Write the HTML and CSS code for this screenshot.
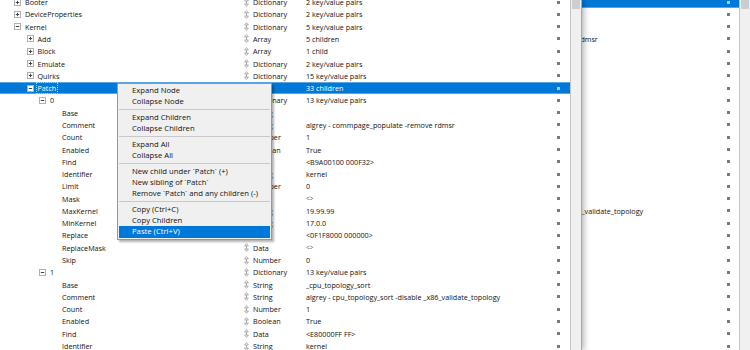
FILE: index.html
```html
<!DOCTYPE html>
<html>
<head>
<meta charset="utf-8">
<link rel="stylesheet" href="styles.css">
</head>
<body>
<div class="desktop">
  <div class="window win-back">
    <div class="tree tree-back">
      <div class="row sel"><div class="name"></div><div class="type"></div><div class="value"></div><div class="mark"></div></div>
      <div class="row"><div class="name"></div><div class="type"></div><div class="value"></div><div class="mark"></div></div>
      <div class="row"><div class="name"></div><div class="type"></div><div class="value"></div><div class="mark"></div></div>
      <div class="row"><div class="name"></div><div class="type"></div><div class="value">algrey - commpage_populate -remove rdmsr</div><div class="mark"></div></div>
      <div class="row"><div class="name"></div><div class="type"></div><div class="value"></div><div class="mark"></div></div>
      <div class="row"><div class="name"></div><div class="type"></div><div class="value"></div><div class="mark"></div></div>
      <div class="row"><div class="name"></div><div class="type"></div><div class="value"></div><div class="mark"></div></div>
      <div class="row"><div class="name"></div><div class="type"></div><div class="value"></div><div class="mark"></div></div>
      <div class="row"><div class="name"></div><div class="type"></div><div class="value"></div><div class="mark"></div></div>
      <div class="row"><div class="name"></div><div class="type"></div><div class="value"></div><div class="mark"></div></div>
      <div class="row"><div class="name"></div><div class="type"></div><div class="value"></div><div class="mark"></div></div>
      <div class="row"><div class="name"></div><div class="type"></div><div class="value"></div><div class="mark"></div></div>
      <div class="row"><div class="name"></div><div class="type"></div><div class="value"></div><div class="mark"></div></div>
      <div class="row"><div class="name"></div><div class="type"></div><div class="value"></div><div class="mark"></div></div>
      <div class="row"><div class="name"></div><div class="type"></div><div class="value"></div><div class="mark"></div></div>
      <div class="row"><div class="name"></div><div class="type"></div><div class="value"></div><div class="mark"></div></div>
      <div class="row"><div class="name"></div><div class="type"></div><div class="value"></div><div class="mark"></div></div>
      <div class="row"><div class="name"></div><div class="type"></div><div class="value">algrey - cpu_topology_sort -disable _x86_validate_topology</div><div class="mark"></div></div>
      <div class="row"><div class="name"></div><div class="type"></div><div class="value"></div><div class="mark"></div></div>
      <div class="row"><div class="name"></div><div class="type"></div><div class="value"></div><div class="mark"></div></div>
      <div class="row"><div class="name"></div><div class="type"></div><div class="value"></div><div class="mark"></div></div>
      <div class="row"><div class="name"></div><div class="type"></div><div class="value"></div><div class="mark"></div></div>
      <div class="row"><div class="name"></div><div class="type"></div><div class="value"></div><div class="mark"></div></div>
      <div class="row"><div class="name"></div><div class="type"></div><div class="value"></div><div class="mark"></div></div>
      <div class="row"><div class="name"></div><div class="type"></div><div class="value"></div><div class="mark"></div></div>
      <div class="row"><div class="name"></div><div class="type"></div><div class="value"></div><div class="mark"></div></div>
      <div class="row"><div class="name"></div><div class="type"></div><div class="value"></div><div class="mark"></div></div>
      <div class="row"><div class="name"></div><div class="type"></div><div class="value"></div><div class="mark"></div></div>
      <div class="row"><div class="name"></div><div class="type"></div><div class="value"></div><div class="mark"></div></div>
    </div>
    <div class="vscroll"><div class="thumb"></div></div>
  </div>

  <div class="window win-front">
    <div class="tree tree-front">
      <div class="row"><div class="name lvl0"><svg class="tw" viewBox="0 0 7 7"><rect x=".5" y=".5" width="6" height="6" fill="#fff" stroke="#b0b0b0"/><path d="M1.8 3.5h3.4M3.5 1.8v3.4" stroke="#444"/></svg><span>Booter</span></div><div class="type"><svg class="ti" viewBox="0 0 5 9"><path d="M2.5 .6 4.4 3H.6Z M2.5 8.4 .6 6h3.8Z" fill="none" stroke="#9a9a9a" stroke-width=".8"/><path d="M2.5 3v3" stroke="#9a9a9a" stroke-width=".8"/></svg><span>Dictionary</span></div><div class="value">2 key/value pairs</div><div class="mark"></div></div>
      <div class="row"><div class="name lvl0"><svg class="tw" viewBox="0 0 7 7"><rect x=".5" y=".5" width="6" height="6" fill="#fff" stroke="#b0b0b0"/><path d="M1.8 3.5h3.4M3.5 1.8v3.4" stroke="#444"/></svg><span>DeviceProperties</span></div><div class="type"><svg class="ti" viewBox="0 0 5 9"><path d="M2.5 .6 4.4 3H.6Z M2.5 8.4 .6 6h3.8Z" fill="none" stroke="#9a9a9a" stroke-width=".8"/><path d="M2.5 3v3" stroke="#9a9a9a" stroke-width=".8"/></svg><span>Dictionary</span></div><div class="value">2 key/value pairs</div><div class="mark"></div></div>
      <div class="row"><div class="name lvl0"><svg class="tw" viewBox="0 0 7 7"><rect x=".5" y=".5" width="6" height="6" fill="#fff" stroke="#b0b0b0"/><path d="M1.8 3.5h3.4" stroke="#444"/></svg><span>Kernel</span></div><div class="type"><svg class="ti" viewBox="0 0 5 9"><path d="M2.5 .6 4.4 3H.6Z M2.5 8.4 .6 6h3.8Z" fill="none" stroke="#9a9a9a" stroke-width=".8"/><path d="M2.5 3v3" stroke="#9a9a9a" stroke-width=".8"/></svg><span>Dictionary</span></div><div class="value">5 key/value pairs</div><div class="mark"></div></div>
      <div class="row"><div class="name lvl1"><svg class="tw" viewBox="0 0 7 7"><rect x=".5" y=".5" width="6" height="6" fill="#fff" stroke="#b0b0b0"/><path d="M1.8 3.5h3.4M3.5 1.8v3.4" stroke="#444"/></svg><span>Add</span></div><div class="type"><svg class="ti" viewBox="0 0 5 9"><path d="M2.5 .6 4.4 3H.6Z M2.5 8.4 .6 6h3.8Z" fill="none" stroke="#9a9a9a" stroke-width=".8"/><path d="M2.5 3v3" stroke="#9a9a9a" stroke-width=".8"/></svg><span>Array</span></div><div class="value">5 children</div><div class="mark"></div></div>
      <div class="row"><div class="name lvl1"><svg class="tw" viewBox="0 0 7 7"><rect x=".5" y=".5" width="6" height="6" fill="#fff" stroke="#b0b0b0"/><path d="M1.8 3.5h3.4M3.5 1.8v3.4" stroke="#444"/></svg><span>Block</span></div><div class="type"><svg class="ti" viewBox="0 0 5 9"><path d="M2.5 .6 4.4 3H.6Z M2.5 8.4 .6 6h3.8Z" fill="none" stroke="#9a9a9a" stroke-width=".8"/><path d="M2.5 3v3" stroke="#9a9a9a" stroke-width=".8"/></svg><span>Array</span></div><div class="value">1 child</div><div class="mark"></div></div>
      <div class="row"><div class="name lvl1"><svg class="tw" viewBox="0 0 7 7"><rect x=".5" y=".5" width="6" height="6" fill="#fff" stroke="#b0b0b0"/><path d="M1.8 3.5h3.4M3.5 1.8v3.4" stroke="#444"/></svg><span>Emulate</span></div><div class="type"><svg class="ti" viewBox="0 0 5 9"><path d="M2.5 .6 4.4 3H.6Z M2.5 8.4 .6 6h3.8Z" fill="none" stroke="#9a9a9a" stroke-width=".8"/><path d="M2.5 3v3" stroke="#9a9a9a" stroke-width=".8"/></svg><span>Dictionary</span></div><div class="value">2 key/value pairs</div><div class="mark"></div></div>
      <div class="row"><div class="name lvl1"><svg class="tw" viewBox="0 0 7 7"><rect x=".5" y=".5" width="6" height="6" fill="#fff" stroke="#b0b0b0"/><path d="M1.8 3.5h3.4M3.5 1.8v3.4" stroke="#444"/></svg><span>Quirks</span></div><div class="type"><svg class="ti" viewBox="0 0 5 9"><path d="M2.5 .6 4.4 3H.6Z M2.5 8.4 .6 6h3.8Z" fill="none" stroke="#9a9a9a" stroke-width=".8"/><path d="M2.5 3v3" stroke="#9a9a9a" stroke-width=".8"/></svg><span>Dictionary</span></div><div class="value">15 key/value pairs</div><div class="mark"></div></div>
      <div class="row sel"><div class="name lvl1"><svg class="tw" viewBox="0 0 7 7"><rect x=".5" y=".5" width="6" height="6" fill="#fff" stroke="#b0b0b0"/><path d="M1.8 3.5h3.4" stroke="#444"/></svg><span class="focus">Patch</span></div><div class="type"><svg class="ti" viewBox="0 0 5 9"><path d="M2.5 .6 4.4 3H.6Z M2.5 8.4 .6 6h3.8Z" fill="none" stroke="#9a9a9a" stroke-width=".8"/><path d="M2.5 3v3" stroke="#9a9a9a" stroke-width=".8"/></svg><span>Array</span></div><div class="value">33 children</div><div class="mark"></div></div>
      <div class="row"><div class="name lvl2"><svg class="tw" viewBox="0 0 7 7"><rect x=".5" y=".5" width="6" height="6" fill="#fff" stroke="#b0b0b0"/><path d="M1.8 3.5h3.4" stroke="#444"/></svg><span>0</span></div><div class="type"><svg class="ti" viewBox="0 0 5 9"><path d="M2.5 .6 4.4 3H.6Z M2.5 8.4 .6 6h3.8Z" fill="none" stroke="#9a9a9a" stroke-width=".8"/><path d="M2.5 3v3" stroke="#9a9a9a" stroke-width=".8"/></svg><span>Dictionary</span></div><div class="value">13 key/value pairs</div><div class="mark"></div></div>
      <div class="row"><div class="name lvl3"><span>Base</span></div><div class="type"><svg class="ti" viewBox="0 0 5 9"><path d="M2.5 .6 4.4 3H.6Z M2.5 8.4 .6 6h3.8Z" fill="none" stroke="#9a9a9a" stroke-width=".8"/><path d="M2.5 3v3" stroke="#9a9a9a" stroke-width=".8"/></svg><span>String</span></div><div class="value"></div><div class="mark"></div></div>
      <div class="row"><div class="name lvl3"><span>Comment</span></div><div class="type"><svg class="ti" viewBox="0 0 5 9"><path d="M2.5 .6 4.4 3H.6Z M2.5 8.4 .6 6h3.8Z" fill="none" stroke="#9a9a9a" stroke-width=".8"/><path d="M2.5 3v3" stroke="#9a9a9a" stroke-width=".8"/></svg><span>String</span></div><div class="value">algrey - commpage_populate -remove rdmsr</div><div class="mark"></div></div>
      <div class="row"><div class="name lvl3"><span>Count</span></div><div class="type"><svg class="ti" viewBox="0 0 5 9"><path d="M2.5 .6 4.4 3H.6Z M2.5 8.4 .6 6h3.8Z" fill="none" stroke="#9a9a9a" stroke-width=".8"/><path d="M2.5 3v3" stroke="#9a9a9a" stroke-width=".8"/></svg><span>Number</span></div><div class="value">1</div><div class="mark"></div></div>
      <div class="row"><div class="name lvl3"><span>Enabled</span></div><div class="type"><svg class="ti" viewBox="0 0 5 9"><path d="M2.5 .6 4.4 3H.6Z M2.5 8.4 .6 6h3.8Z" fill="none" stroke="#9a9a9a" stroke-width=".8"/><path d="M2.5 3v3" stroke="#9a9a9a" stroke-width=".8"/></svg><span>Boolean</span></div><div class="value">True</div><div class="mark"></div></div>
      <div class="row"><div class="name lvl3"><span>Find</span></div><div class="type"><svg class="ti" viewBox="0 0 5 9"><path d="M2.5 .6 4.4 3H.6Z M2.5 8.4 .6 6h3.8Z" fill="none" stroke="#9a9a9a" stroke-width=".8"/><path d="M2.5 3v3" stroke="#9a9a9a" stroke-width=".8"/></svg><span>Data</span></div><div class="value">&lt;B9A00100 000F32&gt;</div><div class="mark"></div></div>
      <div class="row"><div class="name lvl3"><span>Identifier</span></div><div class="type"><svg class="ti" viewBox="0 0 5 9"><path d="M2.5 .6 4.4 3H.6Z M2.5 8.4 .6 6h3.8Z" fill="none" stroke="#9a9a9a" stroke-width=".8"/><path d="M2.5 3v3" stroke="#9a9a9a" stroke-width=".8"/></svg><span>String</span></div><div class="value">kernel</div><div class="mark"></div></div>
      <div class="row"><div class="name lvl3"><span>Limit</span></div><div class="type"><svg class="ti" viewBox="0 0 5 9"><path d="M2.5 .6 4.4 3H.6Z M2.5 8.4 .6 6h3.8Z" fill="none" stroke="#9a9a9a" stroke-width=".8"/><path d="M2.5 3v3" stroke="#9a9a9a" stroke-width=".8"/></svg><span>Number</span></div><div class="value">0</div><div class="mark"></div></div>
      <div class="row"><div class="name lvl3"><span>Mask</span></div><div class="type"><svg class="ti" viewBox="0 0 5 9"><path d="M2.5 .6 4.4 3H.6Z M2.5 8.4 .6 6h3.8Z" fill="none" stroke="#9a9a9a" stroke-width=".8"/><path d="M2.5 3v3" stroke="#9a9a9a" stroke-width=".8"/></svg><span>Data</span></div><div class="value small">&lt;&gt;</div><div class="mark"></div></div>
      <div class="row"><div class="name lvl3"><span>MaxKernel</span></div><div class="type"><svg class="ti" viewBox="0 0 5 9"><path d="M2.5 .6 4.4 3H.6Z M2.5 8.4 .6 6h3.8Z" fill="none" stroke="#9a9a9a" stroke-width=".8"/><path d="M2.5 3v3" stroke="#9a9a9a" stroke-width=".8"/></svg><span>String</span></div><div class="value">19.99.99</div><div class="mark"></div></div>
      <div class="row"><div class="name lvl3"><span>MinKernel</span></div><div class="type"><svg class="ti" viewBox="0 0 5 9"><path d="M2.5 .6 4.4 3H.6Z M2.5 8.4 .6 6h3.8Z" fill="none" stroke="#9a9a9a" stroke-width=".8"/><path d="M2.5 3v3" stroke="#9a9a9a" stroke-width=".8"/></svg><span>String</span></div><div class="value">17.0.0</div><div class="mark"></div></div>
      <div class="row"><div class="name lvl3"><span>Replace</span></div><div class="type"><svg class="ti" viewBox="0 0 5 9"><path d="M2.5 .6 4.4 3H.6Z M2.5 8.4 .6 6h3.8Z" fill="none" stroke="#9a9a9a" stroke-width=".8"/><path d="M2.5 3v3" stroke="#9a9a9a" stroke-width=".8"/></svg><span>Data</span></div><div class="value">&lt;0F1F8000 000000&gt;</div><div class="mark"></div></div>
      <div class="row"><div class="name lvl3"><span>ReplaceMask</span></div><div class="type"><svg class="ti" viewBox="0 0 5 9"><path d="M2.5 .6 4.4 3H.6Z M2.5 8.4 .6 6h3.8Z" fill="none" stroke="#9a9a9a" stroke-width=".8"/><path d="M2.5 3v3" stroke="#9a9a9a" stroke-width=".8"/></svg><span>Data</span></div><div class="value small">&lt;&gt;</div><div class="mark"></div></div>
      <div class="row"><div class="name lvl3"><span>Skip</span></div><div class="type"><svg class="ti" viewBox="0 0 5 9"><path d="M2.5 .6 4.4 3H.6Z M2.5 8.4 .6 6h3.8Z" fill="none" stroke="#9a9a9a" stroke-width=".8"/><path d="M2.5 3v3" stroke="#9a9a9a" stroke-width=".8"/></svg><span>Number</span></div><div class="value">0</div><div class="mark"></div></div>
      <div class="row"><div class="name lvl2"><svg class="tw" viewBox="0 0 7 7"><rect x=".5" y=".5" width="6" height="6" fill="#fff" stroke="#b0b0b0"/><path d="M1.8 3.5h3.4" stroke="#444"/></svg><span>1</span></div><div class="type"><svg class="ti" viewBox="0 0 5 9"><path d="M2.5 .6 4.4 3H.6Z M2.5 8.4 .6 6h3.8Z" fill="none" stroke="#9a9a9a" stroke-width=".8"/><path d="M2.5 3v3" stroke="#9a9a9a" stroke-width=".8"/></svg><span>Dictionary</span></div><div class="value">13 key/value pairs</div><div class="mark"></div></div>
      <div class="row"><div class="name lvl3"><span>Base</span></div><div class="type"><svg class="ti" viewBox="0 0 5 9"><path d="M2.5 .6 4.4 3H.6Z M2.5 8.4 .6 6h3.8Z" fill="none" stroke="#9a9a9a" stroke-width=".8"/><path d="M2.5 3v3" stroke="#9a9a9a" stroke-width=".8"/></svg><span>String</span></div><div class="value">_cpu_topology_sort</div><div class="mark"></div></div>
      <div class="row"><div class="name lvl3"><span>Comment</span></div><div class="type"><svg class="ti" viewBox="0 0 5 9"><path d="M2.5 .6 4.4 3H.6Z M2.5 8.4 .6 6h3.8Z" fill="none" stroke="#9a9a9a" stroke-width=".8"/><path d="M2.5 3v3" stroke="#9a9a9a" stroke-width=".8"/></svg><span>String</span></div><div class="value">algrey - cpu_topology_sort -disable _x86_validate_topology</div><div class="mark"></div></div>
      <div class="row"><div class="name lvl3"><span>Count</span></div><div class="type"><svg class="ti" viewBox="0 0 5 9"><path d="M2.5 .6 4.4 3H.6Z M2.5 8.4 .6 6h3.8Z" fill="none" stroke="#9a9a9a" stroke-width=".8"/><path d="M2.5 3v3" stroke="#9a9a9a" stroke-width=".8"/></svg><span>Number</span></div><div class="value">1</div><div class="mark"></div></div>
      <div class="row"><div class="name lvl3"><span>Enabled</span></div><div class="type"><svg class="ti" viewBox="0 0 5 9"><path d="M2.5 .6 4.4 3H.6Z M2.5 8.4 .6 6h3.8Z" fill="none" stroke="#9a9a9a" stroke-width=".8"/><path d="M2.5 3v3" stroke="#9a9a9a" stroke-width=".8"/></svg><span>Boolean</span></div><div class="value">True</div><div class="mark"></div></div>
      <div class="row"><div class="name lvl3"><span>Find</span></div><div class="type"><svg class="ti" viewBox="0 0 5 9"><path d="M2.5 .6 4.4 3H.6Z M2.5 8.4 .6 6h3.8Z" fill="none" stroke="#9a9a9a" stroke-width=".8"/><path d="M2.5 3v3" stroke="#9a9a9a" stroke-width=".8"/></svg><span>Data</span></div><div class="value">&lt;E80000FF FF&gt;</div><div class="mark"></div></div>
      <div class="row"><div class="name lvl3"><span>Identifier</span></div><div class="type"><svg class="ti" viewBox="0 0 5 9"><path d="M2.5 .6 4.4 3H.6Z M2.5 8.4 .6 6h3.8Z" fill="none" stroke="#9a9a9a" stroke-width=".8"/><path d="M2.5 3v3" stroke="#9a9a9a" stroke-width=".8"/></svg><span>String</span></div><div class="value">kernel</div><div class="mark"></div></div>
    </div>
    <div class="vscroll"><div class="thumb"></div></div>
  </div>

  <div class="menu">
    <div class="mi">Expand Node</div>
    <div class="mi">Collapse Node</div>
    <div class="sep"></div>
    <div class="mi">Expand Children</div>
    <div class="mi">Collapse Children</div>
    <div class="sep"></div>
    <div class="mi">Expand All</div>
    <div class="mi">Collapse All</div>
    <div class="sep"></div>
    <div class="mi">New child under `Patch` (+)</div>
    <div class="mi">New sibling of `Patch`</div>
    <div class="mi">Remove `Patch` and any children (-)</div>
    <div class="sep"></div>
    <div class="mi">Copy (Ctrl+C)</div>
    <div class="mi">Copy Children</div>
    <div class="mi hot">Paste (Ctrl+V)</div>
  </div>
</div>
</body>
</html>
```

FILE: styles.css
```css
* { box-sizing: border-box; }
html, body { margin: 0; padding: 0; }
body {
  width: 750px;
  height: 350px;
  overflow: hidden;
  background: #fff;
  font-family: "Open Sans", "Noto Sans", sans-serif;
  font-size: 7.2px;
  color: #111;
}
.desktop {
  position: relative;
  width: 750px;
  height: 350px;
  overflow: hidden;
}
.window {
  position: absolute;
  top: 0;
  height: 350px;
  background: #fff;
  display: flex;
  overflow: hidden;
}
.win-back { left: 143px; width: 607px; z-index: 1; }
.win-front {
  left: 0;
  width: 582px;
  z-index: 2;
  border-right: 1px solid #a6a6a6;
  box-shadow: 2px 0 6px rgba(0, 0, 0, 0.3);
}
.tree {
  flex: 1;
  min-width: 0;
  display: flex;
  flex-direction: column;
  margin-top: -4px;
}
.row {
  display: flex;
  align-items: center;
  height: 12.29px;
  flex-shrink: 0;
  white-space: nowrap;
}
.name {
  width: 244px;
  flex-shrink: 0;
  display: flex;
  align-items: center;
}
.lvl0 { padding-left: 14px; }
.lvl1 { padding-left: 26.5px; }
.lvl2 { padding-left: 39px; }
.lvl3 { padding-left: 62px; }
.tw {
  width: 7px;
  height: 7px;
  margin-right: 4px;
  flex-shrink: 0;
  display: block;
}
.type {
  width: 62px;
  flex-shrink: 0;
  display: flex;
  align-items: center;
}
.ti {
  width: 5px;
  height: 9px;
  margin-right: 4px;
  flex-shrink: 0;
  display: block;
}
.value {
  flex-shrink: 0;
  overflow: hidden;
}
.small { font-size: 6.4px; color: #555; }
.tree-front .value { width: 251px; }
.tree-back .value { width: 278px; }
.mark {
  width: 3px;
  height: 3px;
  background: #7a7a7a;
  flex-shrink: 0;
}
.row.sel {
  background: #0078d7;
  color: #fff;
  box-shadow: inset 0 1px 0 #5aa6e4, inset 0 -1px 0 #5aa6e4;
}
.row.sel .mark { background: #a9cdee; }
.focus { outline: 1px dotted #a8d0f4; outline-offset: 0; padding: 0 1px; margin-left: -1px; }
.vscroll {
  width: 11px;
  flex-shrink: 0;
  background: #f0f0f0;
  border-left: 1px solid #c4c4c4;
  padding: 0 1px;
}
.thumb {
  height: 9px;
  background: #cdcdcd;
}
.menu {
  position: absolute;
  left: 117px;
  top: 83px;
  width: 155px;
  z-index: 3;
  background: #f0f0f0;
  border: 1px solid #979797;
  padding: 1px;
  box-shadow: 2px 2px 2px rgba(0, 0, 0, 0.3);
  font-size: 7.7px;
  color: #111;
}
.mi {
  height: 11.2px;
  line-height: 11.2px;
  padding-left: 13px;
  white-space: nowrap;
}
.mi.hot { background: #0078d7; color: #fff; }
.sep {
  height: 4.6px;
  display: flex;
  align-items: center;
}
.sep::before {
  content: "";
  flex: 1;
  height: 1px;
  background: #c8c8c8;
}
```
